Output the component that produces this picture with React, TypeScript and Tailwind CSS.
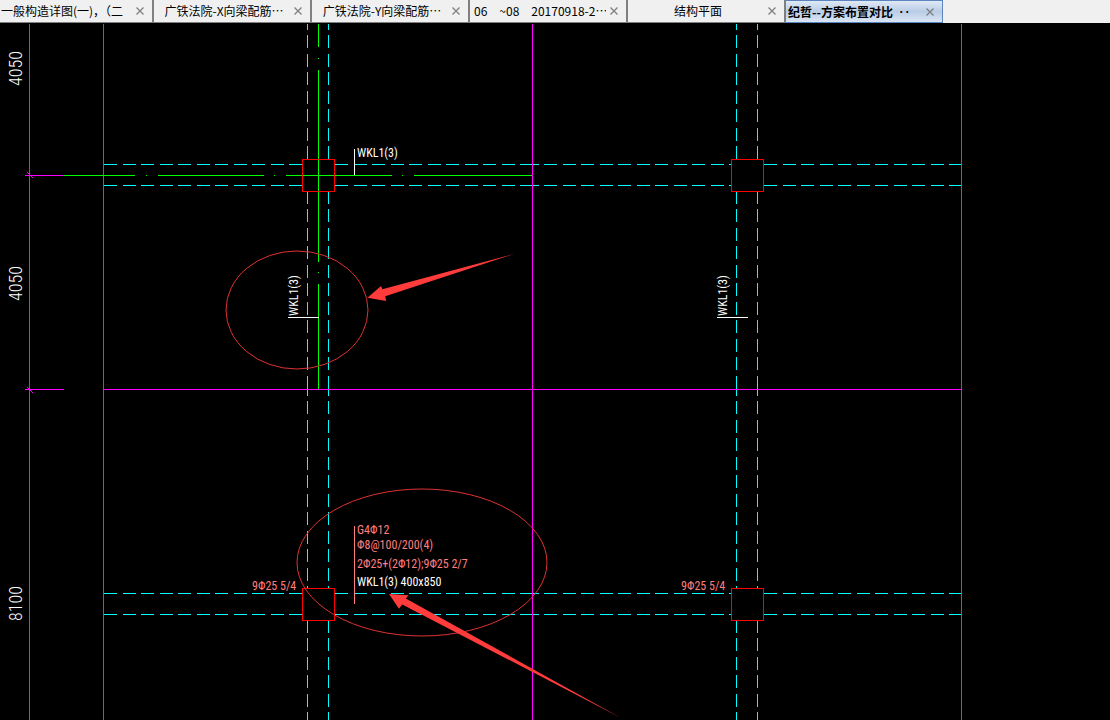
import { useState } from "react";

type Tab = { id: string; title: string; align: string };

const tabs: Tab[] = [
  { id: "detail", title: "一般构造详图(一)，（二", align: "text-left" },
  { id: "beam-x", title: "广铁法院-X向梁配筋…", align: "text-center" },
  { id: "beam-y", title: "广铁法院-Y向梁配筋…", align: "text-center" },
  { id: "dated", title: "06　~08　20170918-2…", align: "text-center" },
  { id: "plan", title: "结构平面", align: "text-center" },
  { id: "compare", title: "纪哲--方案布置对比  ‥", align: "text-left" },
];

function TabBar() {
  const [active, setActive] = useState("compare");
  return (
    <nav
      lang="zh-CN"
      className="flex h-[23px] shrink-0 bg-[#f0f0f0] font-['Noto_Sans_CJK_SC',sans-serif] text-xs text-black"
    >
      {tabs.map((tab, i) => {
        const on = tab.id === active;
        const width = i === 0 ? "w-[154px]" : "w-[158px]";
        const look = on
          ? "-ml-px border border-[#5b84bf] bg-linear-to-b from-[#dfe9f5] via-[#b9cde6] to-[#dbe6f4] font-bold"
          : "border-r-2 border-b border-[#808080]";
        const pad = i === 0 ? "pl-px" : on ? "pl-[2px]" : "pl-1";
        return (
          <div key={tab.id} className={`flex min-w-0 items-center pr-2 ${width} ${look} ${pad}`}>
            <button
              type="button"
              onClick={() => setActive(tab.id)}
              className={`min-w-0 flex-1 overflow-hidden whitespace-pre leading-5 ${tab.align}`}
            >
              {tab.title}
            </button>
            <button type="button" aria-label={`关闭 ${tab.title}`} className="ml-1 shrink-0 text-[#808080]">
              <svg width="8" height="8" viewBox="0 0 8 8" stroke="currentColor" strokeWidth="1.3">
                <path d="M0.5 0.5 7.5 7.5M7.5 0.5 0.5 7.5" />
              </svg>
            </button>
          </div>
        );
      })}
    </nav>
  );
}

/* Each beam edge is a run of dashes: [from, to, dash phase]. */
const runsX = [
  [104, 302, 0],
  [335, 533, 0],
  [533, 731, 7.5],
  [764, 961, 0],
];
const runsY = [
  [24, 159, 7.5],
  [192, 390, 1.5],
  [390, 588, 7.5],
  [621, 720, 1.5],
];

function Beams() {
  return (
    <g stroke="#00ffff" strokeDasharray="13 5.5" shapeRendering="crispEdges">
      {[164.5, 185.5, 593.5, 614.5].map((y) =>
        runsX.map(([a, b, p]) => (
          <line key={`${y}-${a}`} x1={a} x2={b} y1={y} y2={y} strokeDashoffset={p} />
        )),
      )}
      {[307.5, 328.5, 736.5, 757.5].map((x) =>
        runsY.map(([a, b, p]) => (
          <line key={`${x}-${a}`} x1={x} x2={x} y1={a} y2={b} strokeDashoffset={p} />
        )),
      )}
    </g>
  );
}

function Drawing() {
  return (
    <svg
      className="h-full w-full font-['Liberation_Sans_Narrow','Roboto_Condensed','Liberation_Sans',sans-serif]"
      viewBox="0 23 1110 697"
      preserveAspectRatio="xMinYMin meet"
      fill="none"
    >
      <Beams />
      <g stroke="#ff00ff" shapeRendering="crispEdges">
        <path d="M29.5 24V720M103.5 24V720M961.5 24V720M532.5 24V720" />
        <path d="M25 175.5H64M25 389.5H64M103 389.5H962" />
        <path d="M27 172 33 178M27 387 33 393" />
      </g>
      <g stroke="#00ff00" shapeRendering="crispEdges">
        <path d="M64 175.5H135M146 175.5H147M158 175.5H264M274 175.5H275M286 175.5H392M402 175.5H403M414 175.5H532" />
        <path d="M318.5 24V47M318.5 58V59M318.5 70V262M318.5 272V273M318.5 284V389" />
      </g>
      <g stroke="#ff0000" shapeRendering="crispEdges">
        <rect x="302.5" y="159.5" width="32" height="32" />
        <rect x="731.5" y="159.5" width="32" height="32" />
        <rect x="302.5" y="588.5" width="32" height="32" />
        <rect x="731.5" y="588.5" width="32" height="32" />
      </g>
      <g stroke="#ffffff" shapeRendering="crispEdges">
        <path d="M354.5 149V175M288 317.5H319M717 317.5H748" />
      </g>
      <path d="M354.5 526V604" stroke="#ff7f7f" shapeRendering="crispEdges" />

      <g fill="#ffffff" fontSize="18" className="font-light">
        <text transform="translate(22 86) rotate(-90)">4050</text>
        <text transform="translate(22 301) rotate(-90)">4050</text>
        <text transform="translate(22 621) rotate(-90)">8100</text>
      </g>
      <g fill="#ffffff" fontSize="12">
        <text x="357" y="157">WKL1(3)</text>
        <text transform="translate(298 316) rotate(-90)">WKL1(3)</text>
        <text transform="translate(727 316) rotate(-90)">WKL1(3)</text>
        <text x="357" y="586">WKL1(3) 400x850</text>
      </g>
      <g fill="#ff7f7f" fontSize="12">
        <text x="357" y="534">G4Φ12</text>
        <text x="357" y="549">Φ8@100/200(4)</text>
        <text x="357" y="568">2Φ25+(2Φ12);9Φ25 2/7</text>
        <text x="252" y="590">9Φ25 5/4</text>
        <text x="681" y="590">9Φ25 5/4</text>
      </g>

      <g stroke="#e03232">
        <ellipse cx="297" cy="310" rx="71" ry="59" />
        <ellipse cx="422" cy="562.5" rx="125" ry="73.5" />
      </g>
      <g fill="#ff3b3b">
        <path d="M367.5 297.7 381 286 382.3 289.2 514 254 385.3 296.3 386 301Z" />
        <path d="M389 594 408.5 595.3 405.8 598.5 621 718 402.3 604.5 399 608.7Z" />
      </g>
    </svg>
  );
}

export default function App() {
  return (
    <div className="flex h-screen flex-col overflow-hidden bg-black">
      <TabBar />
      <main className="min-h-0 flex-1">
        <Drawing />
      </main>
    </div>
  );
}
